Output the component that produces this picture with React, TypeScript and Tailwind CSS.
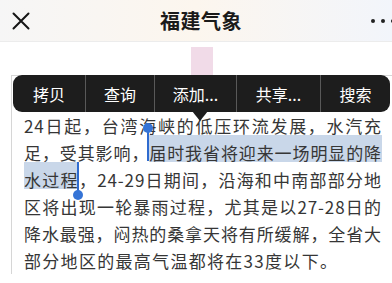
const CJK = "font-['Noto_Sans_CJK_SC','Noto_Sans',sans-serif]"

const menuItems = [
  { label: "拷贝", width: "w-[72px]" },
  { label: "查询", width: "w-[69px]" },
  { label: "添加...", width: "w-[82px]" },
  { label: "共享...", width: "w-[84px]" },
  { label: "搜索", width: "w-[70px]" }
]

function Selected({ children }: { children: React.ReactNode }) {
  return (
    <span className="pt-[5px] bg-[linear-gradient(#c9d7e9,#c9d7e9)] bg-no-repeat bg-[length:100%_27px]">
      {children}
    </span>
  )
}

// zero-width anchor placed in the text flow; the handle itself floats over the text
function Handle({ end }: { end?: boolean }) {
  return (
    <span className="relative inline-block w-0 h-[27px] align-top">
      {end ? (
        <>
          <span className="absolute left-[-2px] top-[-4px] w-[2px] h-[33px] bg-[#2f6bcf]" />
          <span className="absolute left-[-6px] top-[24px] w-[10px] h-[10px] rounded-full bg-[#3574d6]" />
        </>
      ) : (
        <>
          <span className="absolute left-[-2px] top-[-11px] w-[2px] h-[33px] bg-[#2f6bcf]" />
          <span className="absolute left-[-6px] top-[-16px] w-[10px] h-[10px] rounded-full bg-[#3574d6]" />
        </>
      )}
    </span>
  )
}

export default function App() {
  const justified = "[text-align-last:justify]"

  return (
    <div className={`relative w-[392px] h-[283px] overflow-hidden bg-white ${CJK}`}>
      {/* top bar */}
      <header className="h-[42px] grid grid-cols-[1fr_auto_1fr] items-center border-b border-[#ececec] bg-gradient-to-r from-[#f6f6f6] via-[#fcf6ee] to-[#f2f5fb]">
        <div className="pl-[12px]">
          <svg width="18" height="18" viewBox="0 0 18 18" fill="none" stroke="#151515" strokeWidth="2" strokeLinecap="round">
            <path d="M1.5 1.5l15 15M16.5 1.5l-15 15" />
          </svg>
        </div>
        <h1 className="pl-[10px] text-[20px] font-semibold text-[#1a1a1a] tracking-[0.5px]">福建气象</h1>
        <div className="flex justify-end gap-[6px] -mr-[3px]">
          <span className="w-[4px] h-[4px] rounded-full bg-[#222]" />
          <span className="w-[4px] h-[4px] rounded-full bg-[#222]" />
          <span className="w-[4px] h-[4px] rounded-full bg-[#222]" />
        </div>
      </header>

      <div className="ml-[191px] mt-[5px] w-[22px] h-[28px] bg-[#f1dbe8]" />

      <div className="ml-[11px] border-t border-l border-[#d6d6d6] pt-[36px] pl-[12px] pr-[10px] text-[17px] leading-[27px] tracking-[0.9px] text-[#363636] whitespace-nowrap">
        <div className={justified}>24日起，台湾海峡的低压环流发展，水汽充</div>
        <div className={justified}>
          足，受其影响，<Handle />
          <Selected>届时我省将迎来一场明显的降</Selected>
        </div>
        <div className={justified}>
          <Selected>水过程</Selected>
          <Handle end />，24-29日期间，沿海和中南部部分地
        </div>
        <div className={justified}>区将出现一轮暴雨过程，尤其是以27-28日的</div>
        <div className={justified}>降水最强，闷热的桑拿天将有所缓解，全省大</div>
        <div className="tracking-[1.3px]">部分地区的最高气温都将在33度以下。</div>
      </div>

      {/* edit menu */}
      <div className="absolute left-[13px] top-[75px] h-[37px] flex rounded-[9px] bg-[#1d1d1d] text-white text-[16px]">
        {menuItems.map((item, i) => (
          <div
            key={item.label}
            className={`${item.width} flex items-center justify-center ${i > 0 ? "border-l border-[#595959]" : ""}`}
          >
            {item.label}
          </div>
        ))}
      </div>
      <svg className="absolute left-[192px] top-[111px]" width="16" height="10" viewBox="0 0 16 10">
        <polygon points="0,0 16,0 8,10" fill="#1d1d1d" />
      </svg>
    </div>
  )
}
